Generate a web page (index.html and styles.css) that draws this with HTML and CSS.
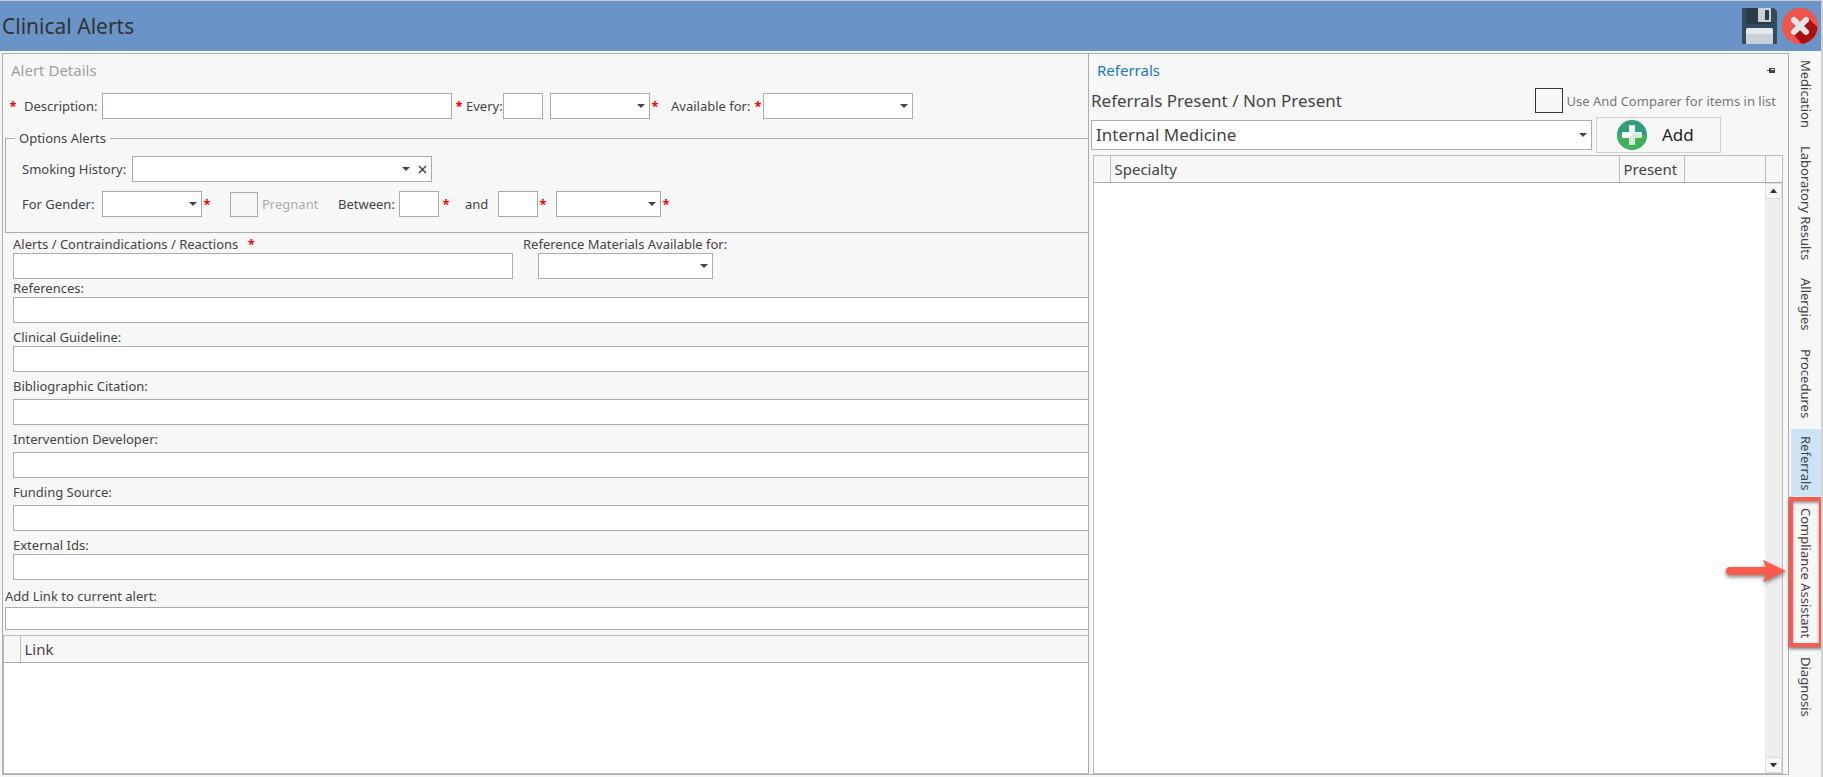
FILE: index.html
```html
<!DOCTYPE html>
<html lang="en">
<head>
    <meta charset="UTF-8">
    <meta name="viewport" content="width=device-width, initial-scale=1.0">
    <title>Clinical Alerts</title>
    <link rel="stylesheet" href="styles.css">
</head>
<body>
    <header class="title-bar">
        <h1>Clinical Alerts</h1>
        <button type="button" class="icon-button" aria-label="Save">
            <svg width="36" height="36" viewBox="0 0 36 36">
                <path d="M1 0h31l3 3v32a1 1 0 0 1-1 1H1a1 1 0 0 1-1-1V1a1 1 0 0 1 1-1z" fill="#324a5b"/>
                <path d="M5 0h24v15a1 1 0 0 1-1 1H6a1 1 0 0 1-1-1z" fill="#273b49"/>
                <path d="M16 0h13v14H17a1 1 0 0 1-1-1z" fill="#cbd0d4"/>
                <rect x="23" y="2" width="4" height="10" rx="1" fill="#273b49"/>
                <path d="M4 36V22a2 2 0 0 1 2-2h23a2 2 0 0 1 2 2v14z" fill="#cbd0d4"/>
                <path d="M4 26v-4a2 2 0 0 1 2-2h23a2 2 0 0 1 2 2v4z" fill="#e4e7e9"/>
            </svg>
        </button>
        <button type="button" class="icon-button" aria-label="Close">
            <svg width="36" height="36" viewBox="0 0 36 36">
                <circle cx="18" cy="18" r="18" fill="#f1544b"/>
                <path d="M27 11l8.500 8A18 18 0 0 1 20 36L11 26l7-8z" fill="#ac1010"/>
                <path d="M12 12l12 12M24 12L12 24" stroke="#e2e6e9" stroke-width="6" stroke-linecap="round"/>
            </svg>
        </button>
    </header>

    <main class="workspace">
        <div class="panels">
            <section class="details">
                <h2 class="details-title">Alert Details</h2>

                <div class="row row-top">
                    <span class="req">*</span>
                    <label for="description" class="w-description">Description:</label>
                    <input type="text" id="description" class="box w-350">
                    <span class="req">*</span>
                    <label for="every" class="w-every">Every:</label>
                    <input type="text" id="every" class="box w-40">
                    <select class="box w-100 space-s" aria-label="Every unit"></select>
                    <span class="req req-tight">*</span>
                    <label for="available" class="w-available space-l">Available for:</label>
                    <span class="req req-tight">*</span>
                    <select id="available" class="box w-150"></select>
                </div>

                <fieldset class="options">
                    <legend>Options Alerts</legend>
                    <div class="row">
                        <label for="smoking" class="w-smoking">Smoking History:</label>
                        <div class="box combo">
                            <select id="smoking"></select>
                            <button type="button" aria-label="Clear">
                                <svg width="9" height="9" viewBox="0 0 9 9"><path d="M1 1l7 7M8 1L1 8" stroke="#444" stroke-width="1.500"/></svg>
                            </button>
                        </div>
                    </div>
                    <div class="row">
                        <label for="gender" class="w-gender">For Gender:</label>
                        <select id="gender" class="box w-100"></select>
                        <span class="req req-tight">*</span>
                        <label class="check check-off w-pregnant"><input type="checkbox" disabled>Pregnant</label>
                        <label for="from" class="w-between">Between:</label>
                        <input type="text" id="from" class="box w-40">
                        <span class="req">*</span>
                        <label for="to" class="w-and">and</label>
                        <input type="text" id="to" class="box w-40">
                        <span class="req req-tight">*</span>
                        <select class="box w-105 space-m" aria-label="Age unit"></select>
                        <span class="req req-tight">*</span>
                    </div>
                </fieldset>

                <div class="pair">
                    <div class="field w-500">
                        <label for="alerts">Alerts / Contraindications / Reactions <span class="req req-label">*</span></label>
                        <input type="text" id="alerts" class="box">
                    </div>
                    <div class="field">
                        <label for="materials">Reference Materials Available for:</label>
                        <select id="materials" class="box w-175"></select>
                    </div>
                </div>
                <div class="fields">
                    <div class="field">
                        <label for="references">References:</label>
                        <input type="text" id="references" class="box open">
                    </div>
                    <div class="field">
                        <label for="guideline">Clinical Guideline:</label>
                        <input type="text" id="guideline" class="box open">
                    </div>
                    <div class="field loose">
                        <label for="citation">Bibliographic Citation:</label>
                        <input type="text" id="citation" class="box open">
                    </div>
                    <div class="field loose">
                        <label for="developer">Intervention Developer:</label>
                        <input type="text" id="developer" class="box open">
                    </div>
                    <div class="field loose">
                        <label for="funding">Funding Source:</label>
                        <input type="text" id="funding" class="box open">
                    </div>
                    <div class="field">
                        <label for="external">External Ids:</label>
                        <input type="text" id="external" class="box open">
                    </div>
                </div>
                <div class="field link-field">
                    <label for="link">Add Link to current alert:</label>
                    <input type="text" id="link" class="box open">
                </div>

                <div class="grid links">
                    <table>
                        <thead>
                            <tr>
                                <th class="marker"></th>
                                <th>Link</th>
                            </tr>
                        </thead>
                    </table>
                </div>
            </section>

            <section class="referrals">
                <div class="referrals-head">
                    <h2>Referrals</h2>
                    <button type="button" class="pin" aria-label="Pin panel">
                        <svg width="9" height="7" viewBox="0 0 9 7">
                            <path d="M0 3h3v1H0zM2 1h1v5H2zM3 1h5v5H3z" fill="#444"/>
                            <path d="M4 2h3v1H4z" fill="#f7f7f7"/>
                        </svg>
                    </button>
                </div>
                <div class="referrals-sub">
                    <h3>Referrals Present / Non Present</h3>
                    <label class="check check-compare"><input type="checkbox">Use And Comparer for items in list</label>
                </div>
                <div class="referrals-add">
                    <select class="box" aria-label="Specialty">
                        <option>Internal Medicine</option>
                    </select>
                    <button type="button" class="add">
                        <svg width="30" height="30" viewBox="0 0 30 30">
                            <circle cx="15" cy="15" r="15" fill="#2f9e7c"/>
                            <path d="M0 15h30a15 15 0 0 1-30 0z" fill="#43b05c"/>
                            <path d="M12 6a1 1 0 0 1 1-1h4a1 1 0 0 1 1 1v6h6a1 1 0 0 1 1 1v4a1 1 0 0 1-1 1h-6v6a1 1 0 0 1-1 1h-4a1 1 0 0 1-1-1v-6H6a1 1 0 0 1-1-1v-4a1 1 0 0 1 1-1h6z" fill="#f2fbf7"/>
                            <path d="M18 12l7 3v2a1 1 0 0 1-1 1h-6v6a1 1 0 0 1-1 1h-4a1 1 0 0 1-1-1v-6z" fill="#d3eadd"/>
                        </svg>
                        Add
                    </button>
                </div>
                <div class="grid specialties">
                    <table>
                        <thead>
                            <tr>
                                <th class="marker"></th>
                                <th>Specialty</th>
                                <th class="col-present">Present</th>
                                <th class="col-blank"></th>
                                <th class="col-scroll"></th>
                            </tr>
                        </thead>
                    </table>
                    <div class="scrollbar">
                        <button type="button" aria-label="Scroll up"><svg width="7" height="4" viewBox="0 0 7 4"><path d="M0 4L3 0h1l3 4z" fill="#333"/></svg></button>
                        <button type="button" aria-label="Scroll down"><svg width="7" height="4" viewBox="0 0 7 4"><path d="M0 0h7L4 4H3z" fill="#333"/></svg></button>
                    </div>
                </div>
            </section>
        </div>

        <nav class="side-tabs">
            <button type="button">Medication</button>
            <button type="button">Laboratory Results</button>
            <button type="button">Allergies</button>
            <button type="button">Procedures</button>
            <button type="button" class="active">Referrals</button>
            <button type="button" class="marked">
                Compliance Assistant
                <svg class="arrow" width="66" height="30" viewBox="0 0 66 30">
                    <path d="M7 9h36L40 2l23 11L40 24l3-7H7a4 4 0 0 1 0-8z" fill="#fb5b4d"/>
                </svg>
            </button>
            <button type="button">Diagnosis</button>
        </nav>
    </main>
</body>
</html>
```
FILE: styles.css
```css
* {
    box-sizing: border-box;
}

body {
    display: flex;
    flex-direction: column;
    min-height: 100vh;
    margin: 0;
    border-top: 1px solid #c8c8c8;
    border-right: 2px solid #d0d0d0;
    background-color: #f7f7f7;
    color: #444;
    font-family: "Noto Sans", "Open Sans", sans-serif;
    font-size: 13px;
    line-height: 18px;
}

h1, h2, h3 {
    margin: 0;
    font-weight: normal;
}

button, input, select {
    margin: 0;
    padding: 0;
    border: 0;
    border-radius: 0;
    background: none;
    color: inherit;
    font: inherit;
}

button svg {
    display: block;
}

/* Title bar */
.title-bar {
    display: flex;
    align-items: center;
    gap: 4px;
    height: 50px;
    padding: 0 3px 0 2px;
    background-color: #6a93c7;
}

.title-bar h1 {
    flex: 1;
    color: #333;
    font-size: 21px;
    line-height: 30px;
}

.workspace {
    flex: 1;
    display: flex;
    padding: 2px 0 2px 2px;
}

.panels {
    flex: 1;
    display: grid;
    grid-template-columns: minmax(0, 155fr) minmax(0, 100fr);
    border: 1px solid #ababab;
}

/* Form controls */
.box {
    height: 26px;
    border: 1px solid #ababab;
    background-color: #fff;
}

select {
    appearance: none;
    background: url("data:image/svg+xml,%3Csvg xmlns='http://www.w3.org/2000/svg' width='8' height='4'%3E%3Cpath d='M0 0h8L4 4z' fill='%23444'/%3E%3C/svg%3E") no-repeat right 4px center;
}

.box.open {
    border-right: 0;
}

.w-40 { width: 40px; }
.w-100 { width: 100px; }
.w-105 { width: 105px; }
.w-150 { width: 150px; }
.w-175 { width: 175px; }
.w-350 { width: 350px; }
.w-500 { width: 500px; }

.req {
    width: 14px;
    color: #f00;
    font-weight: bold;
    text-align: center;
}

.req-tight {
    width: 10px;
}

.row {
    display: flex;
    align-items: center;
}

.space-s {
    margin-left: 7px;
}

.space-m {
    margin-left: 8px;
}

.space-l {
    margin-left: 11px;
}

.check {
    display: flex;
    align-items: center;
    gap: 4px;
}

.check input {
    appearance: none;
    width: 28px;
    height: 25px;
    border: 1px solid #333;
}

.check-off {
    color: #ababab;
}

.check-off input {
    border-color: #ababab;
}

/* Alert details */
.details {
    display: flex;
    flex-direction: column;
    min-width: 0;
}

.details-title {
    padding: 4px 8px 0;
    color: #a0a0a0;
    font-size: 15px;
    line-height: 24px;
}

.row-top {
    padding: 11px 0 10px 3px;
}

.w-description { width: 82px; padding-left: 4px; }
.w-every { width: 37px; }
.w-available { width: 82px; }
.w-smoking { width: 110px; }
.w-gender { width: 80px; }
.w-pregnant { width: 108px; margin-left: 18px; }
.w-between { width: 61px; }
.w-and { width: 33px; margin-left: 12px; }

.options {
    display: flex;
    flex-direction: column;
    gap: 9px;
    min-width: 0;
    margin: 0 0 0 2px;
    padding: 9px 0 15px 16px;
    border: 1px solid #ababab;
    border-right: 0;
}

.options legend {
    margin-left: -7px;
    padding: 0 4px;
}

.combo {
    display: flex;
    align-items: center;
    width: 300px;
}

.combo select {
    flex: 1;
    height: 100%;
}

.combo button {
    padding: 4px;
}

.pair {
    display: flex;
    gap: 10px;
    padding: 2px 0 0 10px;
}

.pair .box {
    width: 100%;
}

.pair .w-175 {
    width: 175px;
    margin-left: 15px;
}

.req-label {
    margin-left: 6px;
}

.field {
    display: flex;
    flex-direction: column;
}

.fields {
    display: flex;
    flex-direction: column;
    gap: 5px;
    padding-left: 10px;
}

.loose {
    gap: 4px;
}

.link-field {
    gap: 2px;
    padding: 7px 0 5px 2px;
}

.link-field .box {
    height: 23px;
}

/* Grids */
.grid {
    flex: 1;
    display: flex;
    flex-direction: column;
    border: 1px solid #bcbcbc;
    background-color: #fff;
}

.links {
    border-right: 0;
}

.grid table {
    width: 100%;
    border-collapse: collapse;
    table-layout: fixed;
}

.grid th {
    height: 26px;
    padding: 0 0 0 4px;
    border-right: 1px solid #bcbcbc;
    border-bottom: 1px solid #ababab;
    background-color: #f7f7f7;
    font-size: 15px;
    font-weight: normal;
    text-align: left;
}

.grid th:last-child {
    border-right: 0;
}

.grid .marker {
    width: 16px;
}

.grid .col-present { width: 65px; }
.grid .col-blank { width: 81px; }
.grid .col-scroll { width: 17px; }

.scrollbar {
    flex: 1;
    display: flex;
    flex-direction: column;
    justify-content: space-between;
    align-self: flex-end;
    width: 17px;
    background-color: #eee;
}

.scrollbar button {
    display: flex;
    align-items: center;
    justify-content: center;
    height: 16px;
    border: 1px solid #dcdcdc;
    background-color: #f7f7f7;
}

/* Referrals panel */
.referrals {
    display: flex;
    flex-direction: column;
    min-width: 0;
    border-left: 1px solid #ababab;
}

.referrals-head {
    display: flex;
    align-items: center;
    justify-content: space-between;
    padding: 4px 12px 0 8px;
}

.referrals-head h2 {
    color: #1979ca;
    font-size: 15px;
    line-height: 24px;
}

.referrals-sub {
    display: flex;
    align-items: center;
    justify-content: space-between;
    padding: 6px 12px 4px 2px;
}

.referrals-sub h3 {
    font-size: 17px;
    line-height: 24px;
}

.check-compare {
    color: #777;
}

.referrals-add {
    display: flex;
    align-items: center;
    gap: 4px;
    padding: 0 67px 2px 2px;
}

.referrals-add .box {
    flex: 1;
    min-width: 0;
    height: 30px;
    padding-left: 4px;
    font-size: 17px;
}

.add {
    display: flex;
    align-items: center;
    gap: 15px;
    width: 125px;
    height: 36px;
    padding-left: 20px;
    border: 1px solid #d0d0d0;
    color: #222;
    font-size: 17px;
}

.specialties {
    margin: 0 5px 0 4px;
}

/* Vertical tabs on the right edge */
.side-tabs {
    display: flex;
    flex-direction: column;
    gap: 5px;
    width: 32px;
    padding-left: 2px;
}

.side-tabs button {
    position: relative;
    padding: 7px 0 6px;
    writing-mode: vertical-rl;
    line-height: 30px;
    text-align: left;
}

.side-tabs .active {
    background-color: #cce4f6;
}

.side-tabs .marked::after {
    content: "";
    position: absolute;
    inset: -4px -2px -2px -2px;
    border: 4px solid #fb5b4d;
    box-shadow: 0 2px 3px rgba(0, 0, 0, 0.5), inset 0 2px 3px rgba(0, 0, 0, 0.4);
}

.arrow {
    position: absolute;
    top: 50%;
    right: 32px;
    margin-top: -15px;
    filter: drop-shadow(0 2px 2px rgba(0, 0, 0, 0.5));
}
```
